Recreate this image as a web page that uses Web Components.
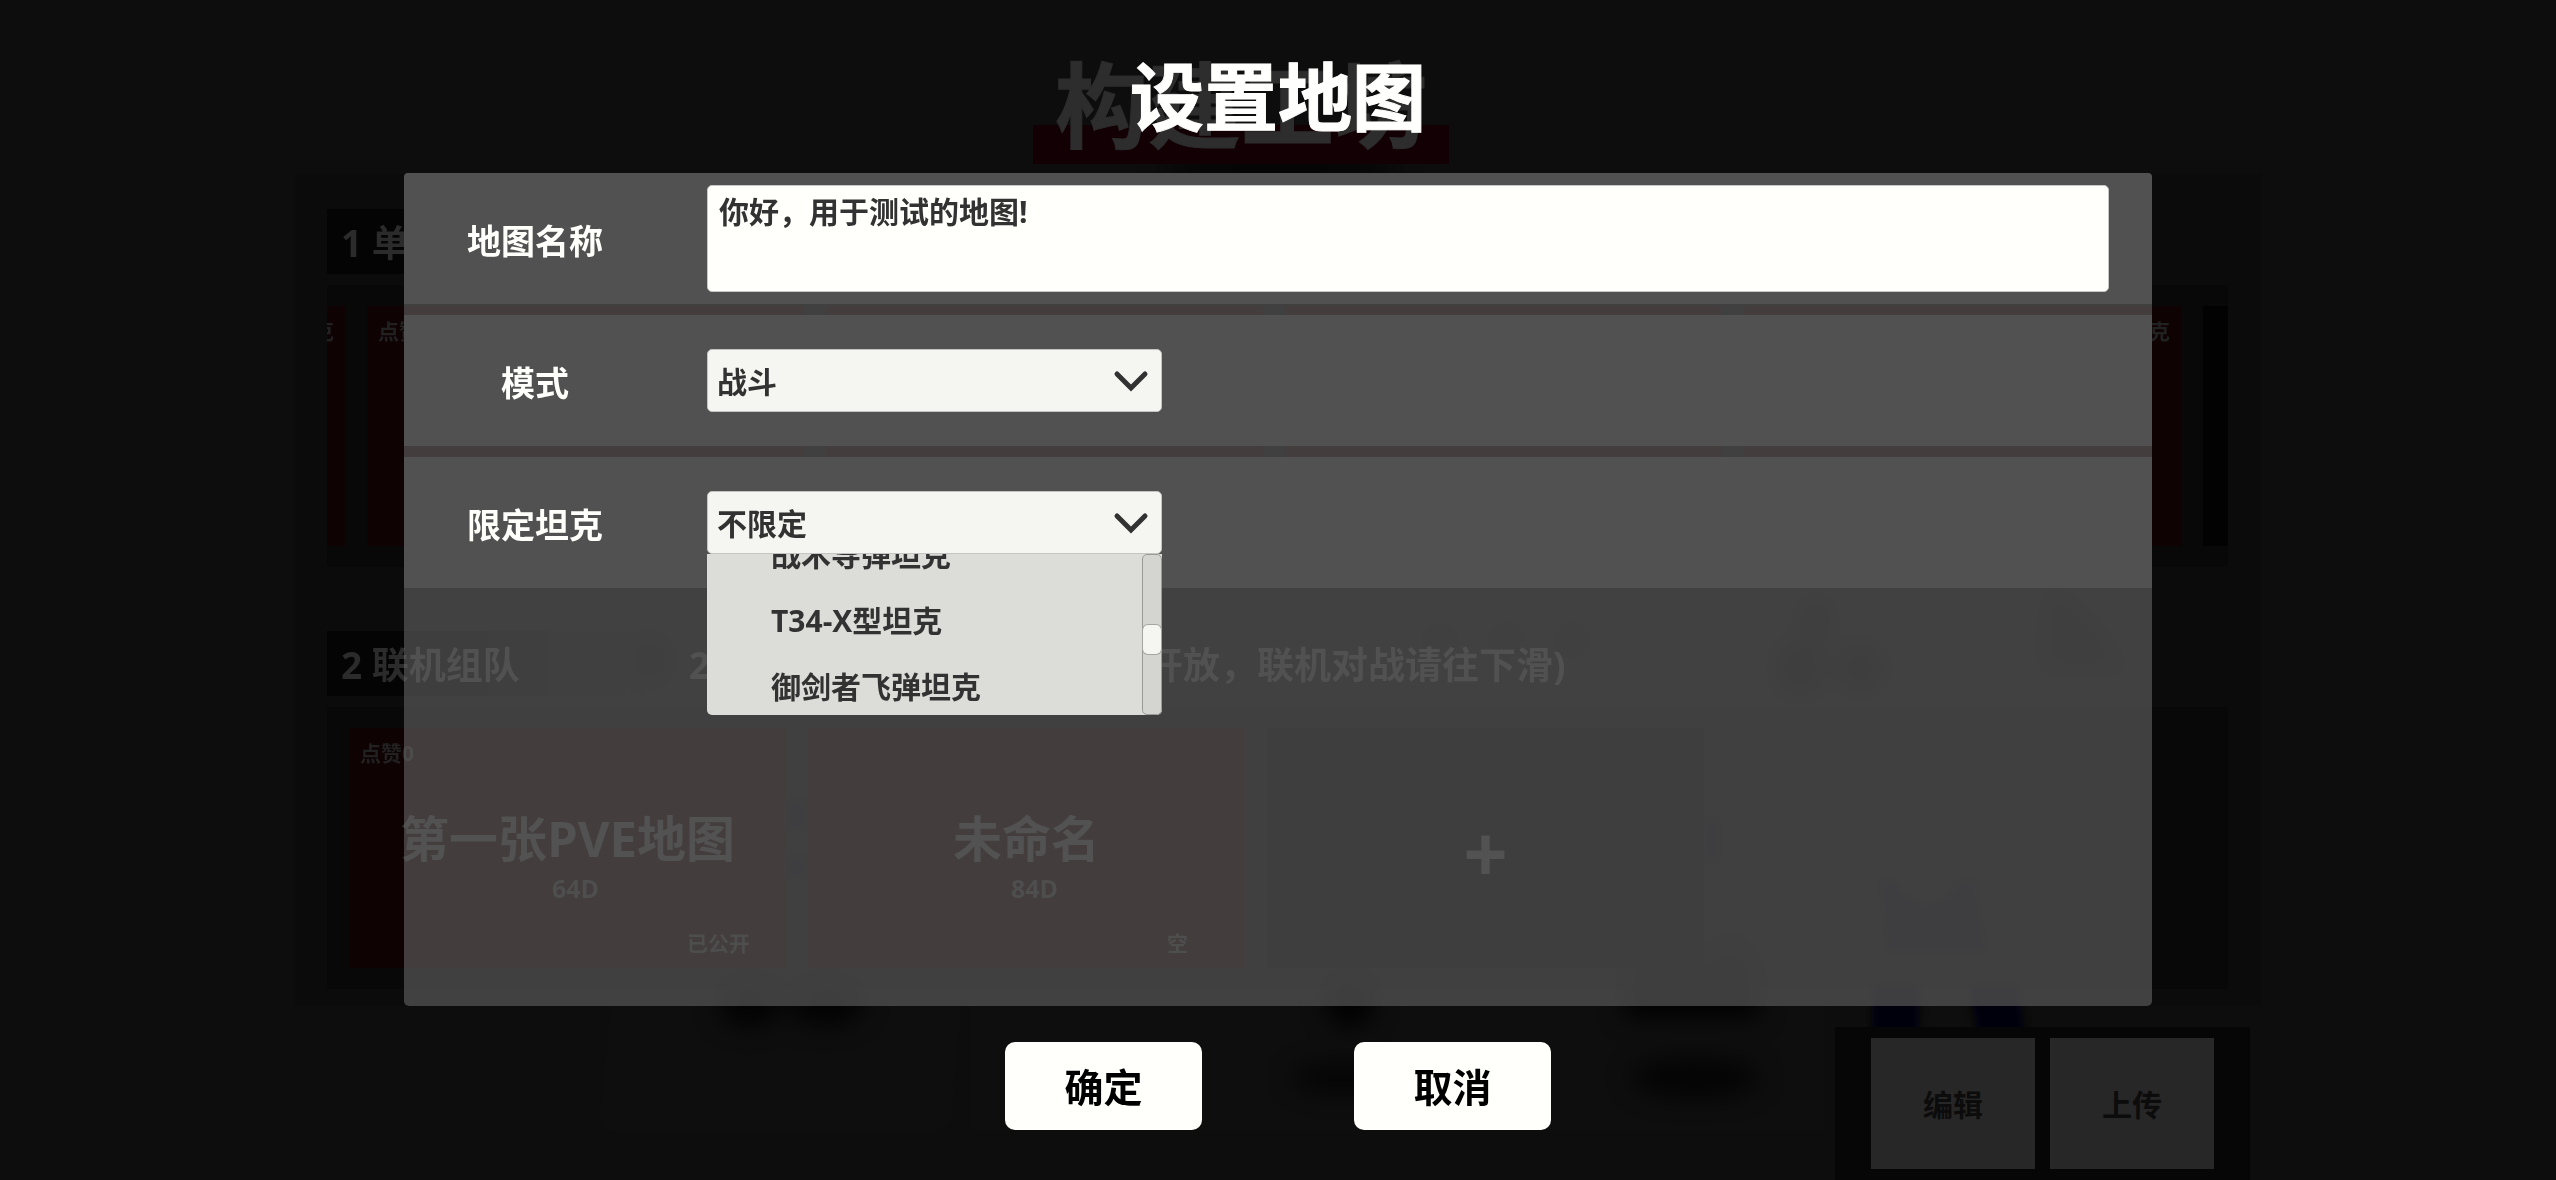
<!DOCTYPE html>
<html lang="zh-CN">
<head>
<meta charset="utf-8">
<title>设置地图</title>
<style>
  html, body { margin: 0; height: 100%; background: #0d0d0d; overflow: hidden; }
  body { font-family: "Open Sans", "Noto Sans CJK SC", sans-serif; font-weight: 700; }
</style>
</head>
<body>
<game-screen></game-screen>
<script>
const define = (name, css, html) => customElements.define(name, class extends HTMLElement {
  constructor() {
    super();
    this.attachShadow({ mode: "open" }).innerHTML =
      `<style>*,:host{box-sizing:border-box}${css}</style>${html}`;
  }
});

/* Blurred scenery behind the lobby */
define("back-drop", `
  :host { display: block; position: absolute; inset: 0; }
  svg { display: block; width: 100%; height: 100%; }
`, `
  <svg viewBox="0 0 2556 1180" preserveAspectRatio="xMidYMid slice" aria-hidden="true">
    <defs>
      <filter id="soft" x="-50%" y="-50%" width="200%" height="200%"><feGaussianBlur stdDeviation="12"/></filter>
      <filter id="edge" x="-50%" y="-50%" width="200%" height="200%"><feGaussianBlur stdDeviation="4"/></filter>
    </defs>
    <g fill="#0e0e0e">
      <path d="M628 830 Q640 800 670 800 H930 Q960 800 960 830 L962 1000 L952 1115 Q948 1132 925 1132 H620 Q596 1132 600 1110 Z"/>
      <path d="M970 1000 H1825 V1130 H970 Z"/>
      <path d="M1855 880 Q1860 850 1890 850 H1970 Q1998 855 2000 890 L2030 1040 H1860 Z"/>
    </g>
    <g filter="url(#soft)" fill="#000">
      <ellipse cx="750" cy="1000" rx="32" ry="27" opacity=".8"/>
      <ellipse cx="826" cy="1000" rx="38" ry="26" opacity=".8"/>
      <ellipse cx="1350" cy="1000" rx="24" ry="26"/>
      <path d="M1630 960 L1650 935 L1680 965 L1710 960 L1730 935 L1752 960 L1760 1016 H1624 Z"/>
      <ellipse cx="1340" cy="1078" rx="48" ry="14" opacity=".7"/>
      <ellipse cx="1695" cy="1078" rx="64" ry="20" opacity=".7"/>
      <ellipse cx="1800" cy="668" rx="24" ry="28"/>
      <ellipse cx="1860" cy="668" rx="22" ry="24"/>
      <ellipse cx="1816" cy="620" rx="14" ry="20"/>
      <path d="M2045 590 L2065 590 L2110 640 L2128 672 H2040 Z" opacity=".5"/>
      <ellipse cx="1440" cy="640" rx="16" ry="14" opacity=".6"/>
      <ellipse cx="1506" cy="640" rx="16" ry="14" opacity=".6"/>
      <ellipse cx="1572" cy="640" rx="16" ry="14" opacity=".6"/>
      <ellipse cx="650" cy="660" rx="22" ry="26" opacity=".6"/>
      <ellipse cx="1280" cy="168" rx="120" ry="10"/>
    </g>
    <g filter="url(#edge)">
      <path d="M1880 880 L1892 880 Q1925 928 1962 880 L1974 880 L1986 952 H1888 Z" fill="#020216"/>
      <path d="M790 800 h16 v30 h-16 z M790 856 h16 v22 h-16 z M1704 820 h14 v40 h-14 z" fill="#040414"/>
    </g>
    <path filter="url(#edge)" d="M1872 985 H1920 L1918 1045 H1872 Z M1968 985 H2018 L2026 1045 H1980 Z" fill="#00020d"/>
  </svg>`);

define("section-bar", `
  :host { display: flex; align-items: center; height: 65px; padding: 2px 0 0 14px; color: #2b2b2b;
    font-size: 37px; line-height: 50px; white-space: pre;
    background: linear-gradient(90deg, #040404 0 100px, transparent 320px); }
  ::slotted(.note) { padding-left: 169px; }
  ::slotted(.rest) { padding-left: 436px; }
`, `<slot></slot>`);

define("map-list", `
  :host { display: flex; gap: 22px; height: 282px; padding: 21px 0; overflow: hidden;
    border-radius: 4px; background: rgba(6,6,6,.5); }
  :host([inset]) { padding-left: 22px; }
`, `<slot></slot>`);

define("map-card", `
  :host { flex: 0 0 437px; display: flex; flex-direction: column; height: 240px; overflow: hidden;
    padding: 13px 11px; color: #2c2c2c; background: #0f0203; font-size: 21px; line-height: 24px; }
  :host([sliver]) { flex-basis: 18px; padding-left: 0; }
  :host([empty]) { background: #040404; }
  :host([blank]) { flex: 1 1 0; background: #020202; padding: 0; }
  .top { display: flex; justify-content: space-between; min-height: 24px; color: #212121; white-space: nowrap; }
  .mid { flex: 1; display: flex; flex-direction: column; align-items: center; justify-content: center; padding-top: 20px; }
  :host([empty]) .mid { padding-top: 10px; }
  .state { padding: 0 36px 0 0; display: flex; justify-content: flex-end; min-height: 24px; color: #242424; }
  :host([sliver]) .top { justify-content: flex-end; }
  .state ::slotted(*) { min-width: 63px; text-align: center; margin-right: -11px; }
  ::slotted([slot=name]) { font-size: 49px; line-height: 60px; white-space: nowrap; }
  ::slotted([slot=size]) { font-size: 25px; line-height: 40px; padding-left: 16px; color: #242424; }
  ::slotted([slot=add]) { border: 0; background: none; font: inherit; color: inherit; font-size: 78px; line-height: 80px; padding: 0; }
`, `
  <div class="top"><span><slot name="likes"></slot></span><span><slot name="tank"></slot></span></div>
  <div class="mid"><slot name="name"></slot><slot name="size"></slot><slot name="add"></slot></div>
  <div class="state"><slot name="state"></slot></div>`);

define("map-lobby", `
  :host { position: relative; display: flex; flex-direction: column; height: 100%; overflow: hidden; }
  header { position: relative; flex: none; display: flex; justify-content: center; height: 174px; padding: 40px 74px 0 0; }
  h1 { margin: 0; height: 124px; padding: 0 22px; color: #2d2d2d; font-size: 93px; line-height: 130px; font-weight: 700;
    -webkit-text-stroke: 1px currentColor; background: linear-gradient(transparent 85px, #130005 85px); }
  main { position: relative; flex: none; height: 832px; margin: 0 295px; padding: 35px 33px 0 32px; background: rgba(8,8,8,.45); }
  section { display: flex; flex-direction: column; gap: 11px; padding-bottom: 64px; }
  footer { position: relative; flex: none; align-self: flex-end; display: flex; gap: 15px; margin: 21px 306px 0 0;
    padding: 11px 36px; height: 160px; background: #060606; }
  footer button { width: 164px; height: 131px; border: 0; background: #272727; color: #0c0c0c; padding: 2px 0 0;
    font: inherit; font-size: 30px; line-height: 40px; }
`, `
  <back-drop></back-drop>
  <header><h1>构建工坊</h1></header>
  <main>
    <section>
      <section-bar><span>1 单</span></section-bar>
      <map-list>
        <map-card sliver><span slot="tank">克</span></map-card>
        <map-card><span slot="likes">点赞</span></map-card>
        <map-card></map-card>
        <map-card></map-card>
        <map-card><span slot="tank">克</span><span slot="state" style="text-align:right">核</span></map-card>
        <map-card blank></map-card>
      </map-list>
    </section>
    <section>
      <section-bar><span>2 联机组队</span><span class="note">2</span><span class="rest">开放，联机对战请往下滑)</span></section-bar>
      <map-list inset>
        <map-card><span slot="likes">点赞0</span><span slot="name">第一张PVE地图</span><span slot="size">64D</span><span slot="state">已公开</span></map-card>
        <map-card><span slot="name">未命名</span><span slot="size">84D</span><span slot="state">空</span></map-card>
        <map-card empty><button slot="add">+</button></map-card>
      </map-list>
    </section>
  </main>
  <footer><button>编辑</button><button>上传</button></footer>`);

define("drop-down", `
  :host { display: grid; position: relative; width: 455px; }
  ::slotted(select) { grid-area: 1 / 1; appearance: none; width: 100%; height: 63px; margin: 0; padding: 2px 56px 0 9px;
    border: 1px solid #c4c5c2; border-radius: 5px; background: #f5f6f2; color: #323232;
    font: inherit; font-size: 30px; line-height: 40px; }
  svg { grid-area: 1 / 1; place-self: center end; width: 36px; height: 24px; margin-right: 13px; pointer-events: none; }
`, `
  <slot></slot>
  <svg viewBox="0 0 36 24" fill="none" stroke="#323232" stroke-width="5" stroke-linejoin="miter" stroke-linecap="round" aria-hidden="true"><path d="M4 5 L18 19 L32 5"/></svg>
  <slot name="list"></slot>`);

define("option-list", `
  :host { position: absolute; top: 100%; left: 0; z-index: 2; display: flex; width: 100%; height: 161px; overflow: hidden;
    border-radius: 0 0 5px 5px; background: #dcddd9; color: #323232; font-size: 30px; line-height: 66px; }
  .view { flex: 1; overflow: hidden; }
  .items { margin-top: -32px; padding-left: 64px; }
  .track { display: flex; flex-direction: column; width: 20px; padding-top: 70px;
    border: 1px solid #9a9b98; border-radius: 5px; background: #d4d5d1; }
  .thumb { height: 29px; border-radius: 5px; background: #f5f6f2; box-shadow: 0 0 0 1px #a5a6a3; }
`, `
  <div class="view"><div class="items"><slot></slot></div></div>
  <div class="track"><div class="thumb"></div></div>`);

define("setting-row", `
  :host { display: flex; align-items: center; gap: 41px; height: 131px; padding-right: 43px; background: #515151; }
  :host(:first-of-type) { border-radius: 4px 4px 0 0; }
  ::slotted(label) { flex: 0 0 262px; padding-top: 4px; text-align: center; color: #fffffb; font-size: 34px; line-height: 44px; }
`, `<slot name="label"></slot><slot></slot>`);

define("settings-dialog", `
  :host { position: absolute; inset: 0; display: flex; flex-direction: column; }
  h2 { margin: 0; padding-top: 47px; height: 173px; text-align: center; color: #fffffd; font-size: 74px; line-height: 100px; font-weight: 700;
    -webkit-text-stroke: 1px currentColor; }
  form { display: flex; flex-direction: column; gap: 11px; height: 833px; margin: 0 404px; border-radius: 5px;
    background: rgba(119,119,119,.5); }
  textarea { flex: 1; height: 107px; margin: 0; padding: 5px 11px; resize: none; outline: 0; overflow: hidden;
    border: 1px solid #c8c8c6; border-radius: 5px; background: #fffffb; color: #323232; font: inherit; font-size: 30px; line-height: 42px; }
  .actions { display: flex; justify-content: center; gap: 152px; padding-top: 36px; }
  .actions button { width: 197px; height: 88px; padding: 2px 0 0; border: 0; border-radius: 10px; background: #fffffb; color: #000;
    font: inherit; font-size: 39px; line-height: 50px; }
`, `
  <h2>设置地图</h2>
  <form id="settings">
    <setting-row><label slot="label" for="name">地图名称</label><textarea id="name">你好，用于测试的地图!</textarea></setting-row>
    <setting-row><label slot="label" for="mode">模式</label><drop-down><select id="mode"><option>战斗</option></select></drop-down></setting-row>
    <setting-row><label slot="label" for="tank">限定坦克</label>
      <drop-down><select id="tank"><option>不限定</option></select>
        <option-list slot="list" role="listbox" aria-label="限定坦克">
          <div role="option">战术导弹坦克</div><div role="option">T34-X型坦克</div><div role="option">御剑者飞弹坦克</div>
        </option-list>
      </drop-down></setting-row>
  </form>
  <div class="actions"><button type="submit" form="settings">确定</button><button type="button">取消</button></div>`);

define("game-screen", `
  :host { display: block; position: relative; height: 100vh; overflow: hidden; }
`, `<map-lobby></map-lobby><settings-dialog role="dialog" aria-label="设置地图"></settings-dialog>`);
</script>
</body>
</html>
